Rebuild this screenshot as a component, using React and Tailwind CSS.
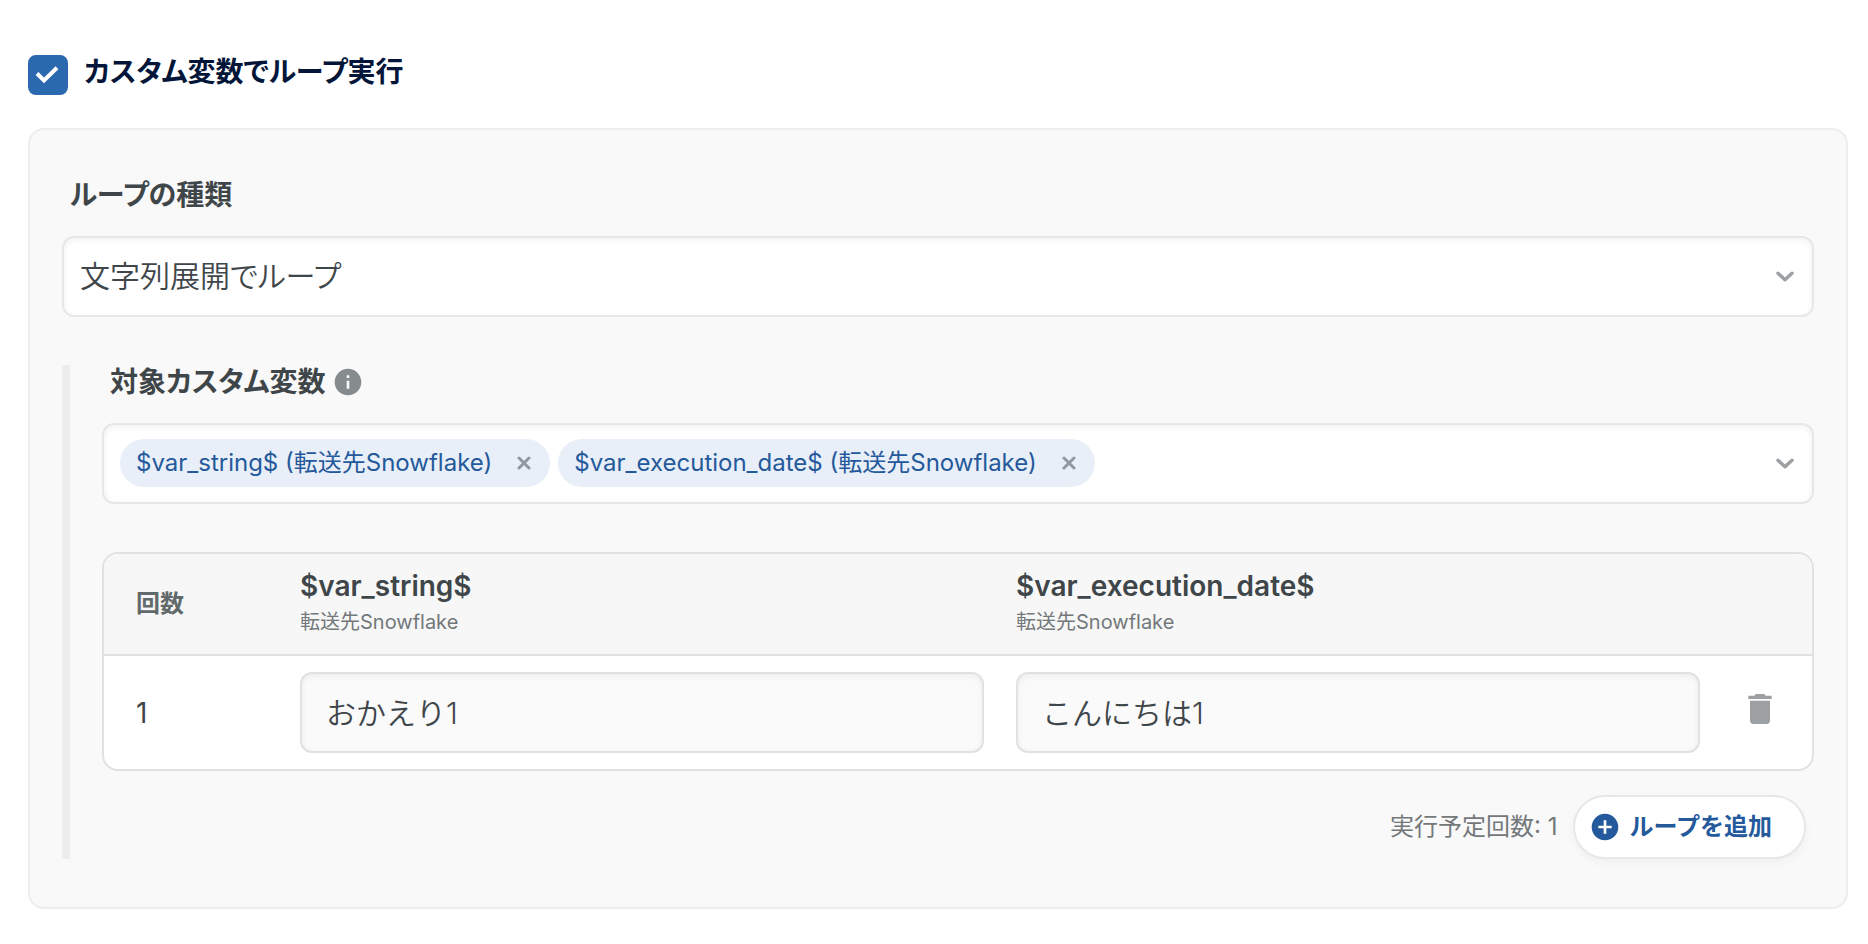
import { useState } from "react";
import { MdAddCircle, MdDelete, MdInfo } from "react-icons/md";

const VARIABLES = [
  { id: "string", name: "$var_string$", source: "転送先Snowflake" },
  { id: "date", name: "$var_execution_date$", source: "転送先Snowflake" },
];

const Chevron = ({ className = "" }) => (
  <svg viewBox="0 0 18 12" className={`h-3 w-[18px] text-[#9ca0a3] ${className}`} fill="none" aria-hidden="true">
    <path d="M2 2.2 L9 8.8 L16 2.2" stroke="currentColor" strokeWidth="3.4" strokeLinecap="round" strokeLinejoin="round" />
  </svg>
);

const Chip = ({ variable, onRemove }) => (
  <li className="flex h-12 items-center rounded-full bg-[#e9eff8] pl-4 pr-3 text-2xl text-[#24599b]">
    <span>{variable.name} ({variable.source})</span>
    <button type="button" aria-label={`${variable.name}を削除`} onClick={onRemove}
      className="ml-[18px] flex h-7 w-7 items-center justify-center">
      <svg viewBox="0 0 14 14" className="h-[14px] w-[14px] text-[#92989f]" fill="none" aria-hidden="true">
        <path d="M2 2 L12 12 M12 2 L2 12" stroke="currentColor" strokeWidth="3" strokeLinecap="round" />
      </svg>
    </button>
  </li>
);

const App = () => {
  const [enabled, setEnabled] = useState(true);
  const [selected, setSelected] = useState(VARIABLES);
  const [rows, setRows] = useState([{ string: "おかえり1", date: "こんにちは1" }]);

  const updateRow = (index, id, value) =>
    setRows(rows.map((row, i) => (i === index ? { ...row, [id]: value } : row)));

  return (
    <main className="bg-white pb-8 pl-7 pr-5 pt-[55px] font-['Inter','Noto_Sans_CJK_JP',sans-serif] text-[#3f464a] [font-feature-settings:'palt']">
      <div className="flex items-start gap-4">
        <span className="grid h-10 w-10 shrink-0">
          <input id="use-loop" type="checkbox" checked={enabled} onChange={(e) => setEnabled(e.target.checked)}
            className="peer col-start-1 row-start-1 h-10 w-10 appearance-none rounded-lg border-2 border-[#2b69af] bg-white checked:bg-[#2b69af]" />
          <svg viewBox="0 0 40 40" className="pointer-events-none col-start-1 row-start-1 hidden h-10 w-10 text-white peer-checked:block" fill="none" aria-hidden="true">
            <path d="M9 18.5 L16 25.5 L29 12.8" stroke="currentColor" strokeWidth="4" />
          </svg>
        </span>
        <label htmlFor="use-loop" className="text-[28px] font-bold leading-[34px] text-[#03163a]">カスタム変数でループ実行</label>
      </div>

      <section className="mt-[33px] rounded-2xl border-2 border-[#ededed] bg-[#f9f9f9] px-8 pb-12 pt-12">
        <label htmlFor="loop-type" className="mb-6 block pl-2 text-[28px] font-bold leading-[34px]">ループの種類</label>
        <div className="grid items-center">
          <select id="loop-type" defaultValue="string"
            className="col-start-1 row-start-1 h-[81px] w-full appearance-none rounded-xl border-2 border-[#e7e7e7] bg-white pl-4 pr-16 text-[30px] font-[350] shadow-[inset_0_2px_6px_rgba(0,0,0,0.06)]">
            <option value="string">文字列展開でループ</option>
          </select>
          <Chevron className="pointer-events-none col-start-1 row-start-1 mr-5 justify-self-end" />
        </div>

        <div className="mt-12 border-l-8 border-[#ededed] pl-8">
          <div className="mb-6 flex items-center gap-1.5 pl-2">
            <h2 id="variables-label" className="text-[28px] font-bold leading-[34px]">対象カスタム変数</h2>
            <MdInfo size={32} className="text-[#868b8e]" aria-hidden="true" />
          </div>
          <div className="flex min-h-[81px] items-center rounded-xl border-2 border-[#e7e7e7] bg-white pl-4 pr-[18px] shadow-[inset_0_2px_6px_rgba(0,0,0,0.06)]">
            <ul aria-labelledby="variables-label" className="flex grow flex-wrap gap-2 pb-px">
              {selected.map((v) => (
                <Chip key={v.id} variable={v} onRemove={() => setSelected(selected.filter((s) => s.id !== v.id))} />
              ))}
            </ul>
            <button type="button" aria-label="カスタム変数を選択">
              <Chevron />
            </button>
          </div>

          <div className="mt-12 overflow-hidden rounded-2xl border-2 border-[#e1e1e1] bg-white">
            <table className="w-full table-fixed border-separate border-spacing-0 text-left">
              <colgroup>
                <col className="w-[180px]" />
                {selected.map((v) => <col key={v.id} />)}
                <col className="w-24" />
              </colgroup>
              <thead>
                <tr className="h-[102px] bg-[#f7f7f7]">
                  <th scope="col" className="border-b-2 border-[#e1e1e1] pl-8 text-2xl font-bold text-[#62696b]">回数</th>
                  {selected.map((v) => (
                    <th key={v.id} scope="col" className="border-b-2 border-[#e1e1e1] px-4">
                      <div className="text-[28px] font-semibold leading-9">{v.name}</div>
                      <div className="text-xl font-normal leading-9 text-[#73787a]">{v.source}</div>
                    </th>
                  ))}
                  <td className="border-b-2 border-[#e1e1e1]" />
                </tr>
              </thead>
              <tbody>
                {rows.map((row, i) => (
                  <tr key={i}>
                    <td className="pl-8 text-[28px]">{i + 1}</td>
                    {selected.map((v) => (
                      <td key={v.id} className="p-4">
                        <input type="text" aria-label={`${v.name} ${i + 1}`} value={row[v.id]}
                          onChange={(e) => updateRow(i, v.id, e.target.value)}
                          className="block h-[81px] w-full rounded-xl border-2 border-[#e1e1e1] bg-[#fafafa] px-6 pb-1 text-[30px] font-[350] shadow-[inset_0_2px_6px_rgba(0,0,0,0.06)] [font-feature-settings:normal]" />
                      </td>
                    ))}
                    <td className="pb-2 pr-2 text-center">
                      <button type="button" aria-label="ループを削除" className="align-middle"
                        onClick={() => setRows(rows.filter((_, n) => n !== i))}>
                        <MdDelete size={40} className="text-[#9ca0a3]" />
                      </button>
                    </td>
                  </tr>
                ))}
              </tbody>
            </table>
          </div>

          <div className="mt-6 flex items-center justify-end gap-4 pr-2">
            <p className="text-2xl text-[#73787a]">実行予定回数: {rows.length}</p>
            <button type="button" onClick={() => setRows([...rows, { string: "", date: "" }])}
              className="flex h-16 items-center gap-2 rounded-full border-2 border-[#e7e7e7] bg-white pl-[14px] pr-8 text-2xl font-bold text-[#24599b] shadow-[0_4px_8px_rgba(0,0,0,0.04)] [font-feature-settings:normal]">
              <MdAddCircle size={32} aria-hidden="true" />
              ループを追加
            </button>
          </div>
        </div>
      </section>
    </main>
  );
};

export default App;
